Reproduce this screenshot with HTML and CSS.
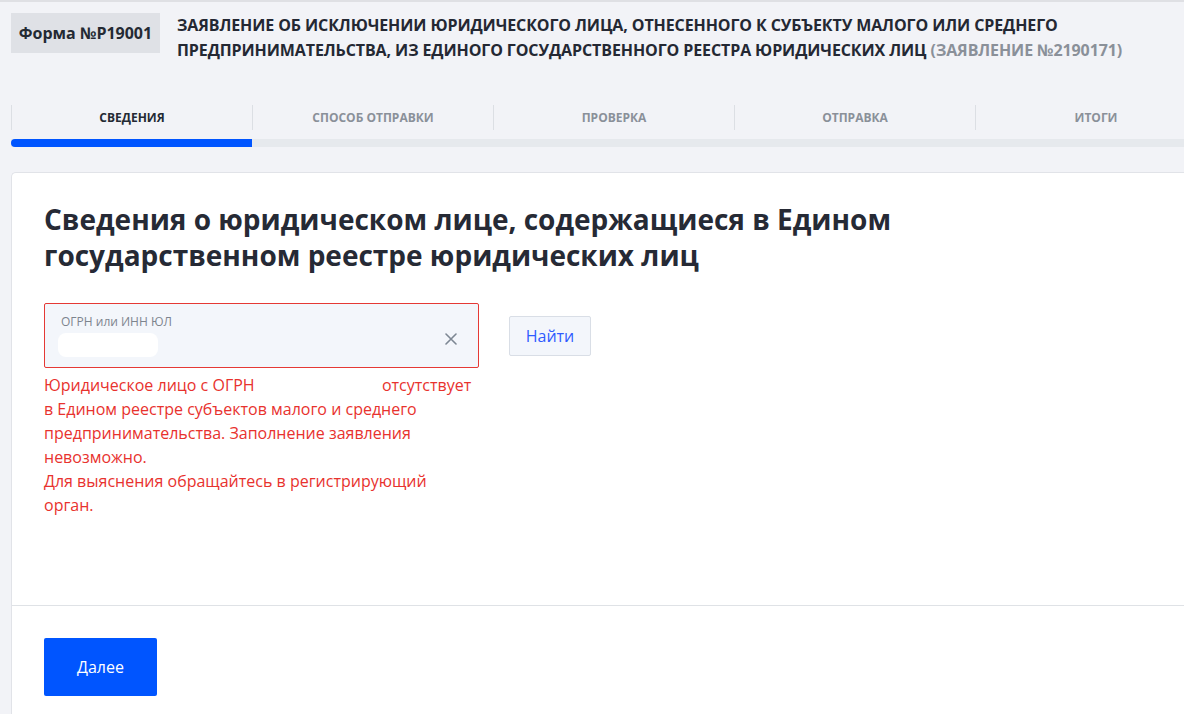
FILE: index.html
```html
<!DOCTYPE html>
<html lang="ru">
<head>
<meta charset="utf-8">
<title>Форма №P19001</title>
<link rel="stylesheet" href="styles.css">
</head>
<body>
<div class="page">
  <header class="header">
    <div class="form-badge">Форма №P19001</div>
    <h1 class="doc-title">Заявление об исключении юридического лица, отнесенного к субъекту малого или среднего предпринимательства, из Единого государственного реестра юридических лиц <span class="doc-num">(Заявление №2190171)</span></h1>
  </header>

  <nav class="steps">
    <div class="step active">Сведения</div>
    <div class="step">Способ отправки</div>
    <div class="step">Проверка</div>
    <div class="step">Отправка</div>
    <div class="step">Итоги</div>
  </nav>
  <div class="progress"><div class="progress-fill"></div></div>

  <main class="card">
    <section class="card-body">
      <h2 class="section-title">Сведения о юридическом лице, содержащиеся в Едином государственном реестре юридических лиц</h2>
      <div class="search-row">
        <div class="field-col">
          <div class="field error">
            <div class="field-label">ОГРН или ИНН ЮЛ</div>
            <div class="field-value"><span class="redacted"></span></div>
            <span class="clear-btn">
              <svg width="12" height="12" viewBox="0 0 12 12"><path d="M1 1 L11 11 M11 1 L1 11" stroke="#7d8793" stroke-width="1.6" stroke-linecap="round"/></svg>
            </span>
          </div>
          <p class="error-text">Юридическое лицо с ОГРН <span class="gap"></span> отсутствует<br>в Едином реестре субъектов малого и среднего<br>предпринимательства. Заполнение заявления<br>невозможно.<br>Для выяснения обращайтесь в регистрирующий<br>орган.</p>
        </div>
        <button class="btn-find">Найти</button>
      </div>
    </section>
    <footer class="card-footer">
      <button class="btn-next">Далее</button>
    </footer>
  </main>
</div>
</body>
</html>
```

FILE: styles.css
```css
* { box-sizing: border-box; }

html, body {
  margin: 0;
  padding: 0;
}

body {
  background: #f2f3f7;
  font-family: "Open Sans", "Noto Sans", Arial, sans-serif;
  color: #1f2633;
  border-top: 2px solid #dfe0e4;
  overflow: hidden;
  height: 714px;
}

.page {
  padding-left: 11px;
}

.header {
  display: flex;
  align-items: flex-start;
  padding-top: 11px;
  height: 61px;
}

.form-badge {
  flex: none;
  width: 149px;
  height: 40px;
  background: #dfe1e6;
  font-size: 16px;
  font-weight: 700;
  color: #242a33;
  display: flex;
  align-items: center;
  justify-content: center;
}

.doc-title {
  margin: 0 0 0 17px;
  width: 985px;
  font-size: 16px;
  line-height: 25px;
  font-weight: 700;
  text-transform: uppercase;
  color: #242833;
  letter-spacing: -0.1px;
}

.doc-num {
  color: #8a9099;
  white-space: nowrap;
}

.steps {
  display: flex;
  margin-top: 42px;
}

.step {
  width: 241px;
  flex: none;
  height: 25px;
  border-left: 1px solid #dcdfe4;
  font-size: 12px;
  font-weight: 700;
  text-transform: uppercase;
  color: #8a9099;
  display: flex;
  align-items: center;
  justify-content: center;
}

.step.active {
  color: #242a33;
}

.progress {
  margin-top: 9px;
  height: 8px;
  background: #e6e9ed;
}

.progress-fill {
  width: 241px;
  height: 100%;
  background: #0055ff;
  border-radius: 4px 0 0 4px;
}

.card {
  margin-top: 25px;
  background: #fff;
  border: 1px solid #e1e3e8;
  border-right: none;
  border-radius: 5px 0 0 0;
}

.card-body {
  padding: 28px 32px 88px;
}

.section-title {
  margin: 0;
  max-width: 880px;
  font-size: 28px;
  line-height: 36px;
  font-weight: 700;
  color: #262a35;
}

.search-row {
  display: flex;
  align-items: flex-start;
  gap: 30px;
  margin-top: 30px;
}

.field-col {
  width: 435px;
}

.field {
  position: relative;
  height: 65px;
  background: #f3f6fb;
  border: 1px solid #dde2e8;
  border-radius: 2px;
  padding: 10px 16px 0;
}

.field.error {
  border-color: #e53935;
}

.field-label {
  font-size: 12px;
  line-height: 16px;
  color: #7d848e;
}

.field-value {
  height: 26px;
  padding-top: 3px;
}

.redacted {
  display: block;
  width: 100px;
  height: 24px;
  margin-left: -3px;
  background: #fff;
  border-radius: 8px;
}

.clear-btn {
  position: absolute;
  right: 21px;
  top: 29px;
  width: 12px;
  height: 12px;
  display: block;
}

.clear-btn svg { display: block; }

.error-text {
  margin: 5px 0 0;
  font-size: 16px;
  line-height: 24px;
  color: #e8322e;
}

.gap {
  display: inline-block;
  width: 119px;
}

.btn-find {
  margin-top: 13px;
  width: 82px;
  height: 40px;
  background: #f3f6fb;
  border: 1px solid #d9dee6;
  border-radius: 2px;
  font-family: inherit;
  font-size: 16px;
  color: #2f5bff;
  padding: 0;
}

.card-footer {
  border-top: 1px solid #dfe2e6;
  padding: 32px 32px 40px;
}

.btn-next {
  width: 113px;
  height: 58px;
  background: #0055ff;
  border: none;
  border-radius: 2px;
  color: #fff;
  font-family: inherit;
  font-size: 16px;
  padding: 0;
}
```
